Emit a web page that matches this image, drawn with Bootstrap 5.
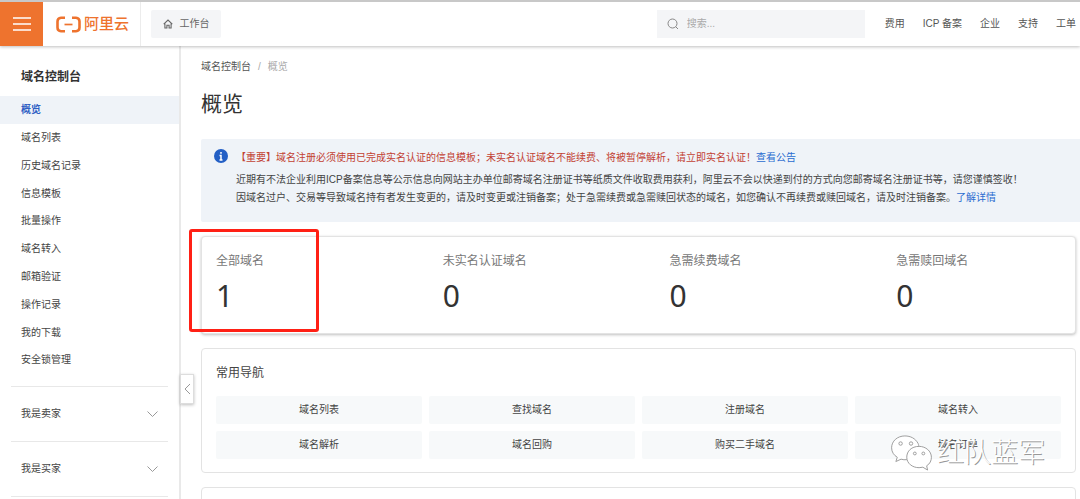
<!DOCTYPE html>
<html lang="zh-CN">
<head>
<meta charset="utf-8">
<meta name="viewport" content="width=device-width, initial-scale=1">
<title>域名控制台</title>
<link href="https://cdn.jsdelivr.net/npm/bootstrap@5.3.0/dist/css/bootstrap.min.css" rel="stylesheet">
<style>
  body { font-family: "Liberation Sans", "Noto Sans CJK SC", sans-serif; font-size: 10px; line-height: 18px; color: #444; height: 100vh; overflow: hidden; }
  a { text-decoration: none; color: inherit; }
  .topbar { height: 46px; border-top: 2px solid #c8c8c8; box-shadow: 0 1px 3px rgba(0,0,0,.25); z-index: 2; }
  .menu-btn { width: 43px; background: #ee732e; border: 0; border-radius: 0; padding: 0; }
  .logo { width: 98px; border-right: 1px solid #ececec; padding-left: 13px; color: #ee732e; gap: 3px; font-size: 15px; font-weight: 500; }
  .work-btn { background: #f4f5f7; color: #666; height: 28px; border-radius: 2px; width: 70px; gap: 7px; margin-left: 10px; }
  .search-box { background: #f4f5f7; width: 208px; height: 28px; padding-left: 10px; gap: 8px; }
  .search-box input { background: transparent; border: 0; outline: 0; padding: 0; min-width: 0; }
  .search-box input::placeholder { color: #aaa; }
  .top-links { gap: 18px; color: #555; margin-left: 20px; padding-right: 4px; }
  .side { width: 181px; border-right: 2px solid #e9e9e9; }
  .side-title { font-size: 12px; font-weight: 700; color: #333; padding: 20px 21px 12px; margin: 4px 0 0; }
  .side-nav { height: 278px; }
  .side-link { padding: 0 21px; flex: 1; display: flex; align-items: center; }
  .side-link.on { background: #eff3f8; color: #2f5fc4; font-weight: 700; }
  .side-group { margin: 0 11px; border: 0; border-top: 1px solid #e8e8e8; height: 55px; padding: 0 10px; background: none; color: inherit; }
  .fold { position: absolute; left: 180px; top: 328px; width: 14px; height: 30px; padding: 0; background: #fff; border: 1px solid #ddd; box-shadow: 0 1px 3px rgba(0,0,0,.25); z-index: 3; }
  .page { padding: 12px 0 0 20px; }
  .crumbs { gap: 7px; color: #555; }
  .crumbs span { color: #aaa; }
  .page-title { font-size: 21px; line-height: 30px; font-weight: 400; color: #333; margin: 13px 0 20px; }
  .notice { background: #eff3f8; padding: 10px 13px 10px; gap: 8px; height: 83px; border-radius: 2px 0 0 2px; }
  .notice a { color: #2a6cd0; }
  .important { color: #c24133; }
  .panel { background: #fff; border: 1px solid #e3e3e3; border-radius: 4px; margin-right: 4px; padding: 0 14px; }
  .stats { height: 98px; box-shadow: 0 1px 3px rgba(0,0,0,.25); margin-top: 14px; padding-top: 15px; }
  .stat-grid { display: grid; grid-template-columns: repeat(4, 1fr); column-gap: 62px; }
  .stat-name { font-size: 12px; color: #777; }
  .stat-num { font-family: "Noto Sans", sans-serif; font-size: 30px; line-height: 36px; margin-top: 8px; color: #333; }
  .marker { position: absolute; left: -13px; top: -8px; width: 130px; height: 103px; border: 3px solid #ff2015; border-radius: 3px; }
  .quick { margin-top: 14px; padding-top: 15px; padding-bottom: 13px; }
  .quick h2 { font-size: 12px; line-height: 18px; margin: 0 0 14px; font-weight: 400; }
  .quick-grid { display: grid; grid-template-columns: repeat(4, 1fr); gap: 7px; }
  .quick-grid a { background: #f7f9fa; height: 28px; border-radius: 2px; display: flex; align-items: center; justify-content: center; }
  .watermark { position: absolute; right: 35px; bottom: 28px; gap: 4px; font-size: 27px; line-height: 36px; color: #fff; text-shadow: 1px 1px 0 #999; font-weight: 300; }
</style>
</head>
<body class="d-flex flex-column">
<header class="topbar d-flex align-items-stretch flex-shrink-0 bg-white position-relative">
  <button class="menu-btn btn d-flex align-items-center justify-content-center" aria-label="菜单">
    <svg width="18" height="16" stroke="#fff" stroke-width="1.5"><path d="M0 2H18M0 8H18M0 14H18"/></svg>
  </button>
  <a href="#" class="logo d-flex align-items-center text-nowrap">
    <svg class="flex-shrink-0" width="25" height="17" viewBox="0 0 25 17" fill="none" stroke="#ee732e"><path d="M9 1.800H5Q1.500 2 1.500 5.500V11.500Q1.500 15 5 15.200H9M16 1.800H20Q23.500 2 23.500 5.500V11.500Q23.500 15 20 15.200H16" stroke-width="2.600"/><path d="M8.500 8.500H16.500" stroke-width="1.700"/></svg>
    <span>阿里云</span>
  </a>
  <a href="#" class="work-btn d-flex align-items-center justify-content-center align-self-center">
    <svg width="10" height="10" viewBox="0 0 10 10" fill="none" stroke="#666" stroke-width="1.100"><path d="M.7 5.200 5 1 9.300 5.200M1.900 4.500V9H3.900V6.200H6.100V9H8.100V4.500"/></svg>工作台
  </a>
  <label class="search-box d-flex align-items-center align-self-center ms-auto">
    <svg width="12" height="12" viewBox="0 0 12 12" fill="none" stroke="#888"><circle cx="5.500" cy="5.500" r="4.500"/><path d="M8.700 8.700 11 11"/></svg>
    <input type="search" placeholder="搜索..." aria-label="搜索">
  </label>
  <nav class="top-links d-flex align-items-center text-nowrap">
    <a href="#">费用</a><a href="#">ICP 备案</a><a href="#">企业</a><a href="#">支持</a><a href="#">工单</a>
  </nav>
</header>
<div class="d-flex flex-grow-1 position-relative overflow-hidden">
  <aside class="side flex-shrink-0">
    <h1 class="side-title">域名控制台</h1>
    <nav class="side-nav d-flex flex-column">
      <a href="#" class="side-link on">概览</a><a href="#" class="side-link">域名列表</a><a href="#" class="side-link">历史域名记录</a><a href="#" class="side-link">信息模板</a><a href="#" class="side-link">批量操作</a><a href="#" class="side-link">域名转入</a><a href="#" class="side-link">邮箱验证</a><a href="#" class="side-link">操作记录</a><a href="#" class="side-link">我的下载</a><a href="#" class="side-link">安全锁管理</a>
    </nav>
    <div class="d-flex flex-column pt-2 mt-1">
      <button class="side-group d-flex align-items-center justify-content-between">我是卖家<svg width="11" height="7" fill="none" stroke="#999"><path d="M.5.5 5.500 5.500 10.500.5"/></svg></button>
      <button class="side-group d-flex align-items-center justify-content-between">我是买家<svg width="11" height="7" fill="none" stroke="#999"><path d="M.5.5 5.500 5.500 10.500.5"/></svg></button>
      <div class="side-group"></div>
    </div>
  </aside>
  <button class="fold d-flex align-items-center justify-content-center" aria-label="收起"><svg width="7" height="12" fill="none" stroke="#999"><path d="M6 1 1 6 6 11"/></svg></button>
  <main class="page flex-grow-1">
    <nav class="crumbs d-flex"><a href="#">域名控制台</a><span>/</span><span>概览</span></nav>
    <h2 class="page-title">概览</h2>
    <section class="notice d-flex text-nowrap">
      <svg class="flex-shrink-0" width="14" height="14"><circle cx="7" cy="7" r="7" fill="#235fc5"/><path d="M7 3V4.700M5.500 6.500H7V11M5.500 11H8.500" fill="none" stroke="#fff" stroke-width="1.500"/></svg>
      <div class="pt-px">
        <div class="important mb-1 pt-0">【重要】域名注册必须使用已完成实名认证的信息模板；未实名认证域名不能续费、将被暂停解析，请立即实名认证！<a href="#">查看公告</a></div>
        <div>近期有不法企业利用ICP备案信息等公示信息向网站主办单位邮寄域名注册证书等纸质文件收取费用获利，阿里云不会以快递到付的方式向您邮寄域名注册证书等，请您谨慎签收！</div>
        <div>因域名过户、交易等导致域名持有者发生变更的，请及时变更或注销备案；处于急需续费或急需赎回状态的域名，如您确认不再续费或赎回域名，请及时注销备案。<a href="#">了解详情</a></div>
      </div>
    </section>
    <section class="panel stats position-relative">
      <div class="stat-grid">
        <div><div class="stat-name">全部域名</div><div class="stat-num">1</div></div>
        <div><div class="stat-name">未实名认证域名</div><div class="stat-num">0</div></div>
        <div><div class="stat-name">急需续费域名</div><div class="stat-num">0</div></div>
        <div><div class="stat-name">急需赎回域名</div><div class="stat-num">0</div></div>
      </div>
      <div class="marker"></div>
    </section>
    <section class="panel quick">
      <h2>常用导航</h2>
      <div class="quick-grid">
        <a href="#">域名列表</a><a href="#">查找域名</a><a href="#">注册域名</a><a href="#">域名转入</a>
        <a href="#">域名解析</a><a href="#">域名回购</a><a href="#">购买二手域名</a><a href="#">域名订单</a>
      </div>
    </section>
    <section class="panel quick"></section>
  </main>
  <div class="watermark d-flex align-items-center">
    <svg width="43" height="36" viewBox="0 0 44 38" fill="#fff" stroke="#999"><path d="M15 1C7 1 1 6.500 1 13.500C1 18 3.500 21.500 7 23.500L5.500 28 11 25.500Q14 26.500 17 26C30 25 31 14 29 9C26 3.500 21 1 15 1Z"/><path d="M30 12C22 12 17 17 17 23.500C17 30 23 34.500 30 34.500L34 34 39 37 38 32.500C41.500 30.500 43 27 43 23.500C43 17 37 12 30 12Z"/><g fill="none"><circle cx="10.500" cy="9" r="1.800"/><circle cx="21.500" cy="9" r="1.800"/><circle cx="25.500" cy="19.500" r="1.500"/><circle cx="34.500" cy="19.500" r="1.500"/></g></svg>
    <span>红队蓝军</span>
  </div>
</div>
<script src="https://cdn.jsdelivr.net/npm/bootstrap@5.3.0/dist/js/bootstrap.bundle.min.js"></script>
</body>
</html>
